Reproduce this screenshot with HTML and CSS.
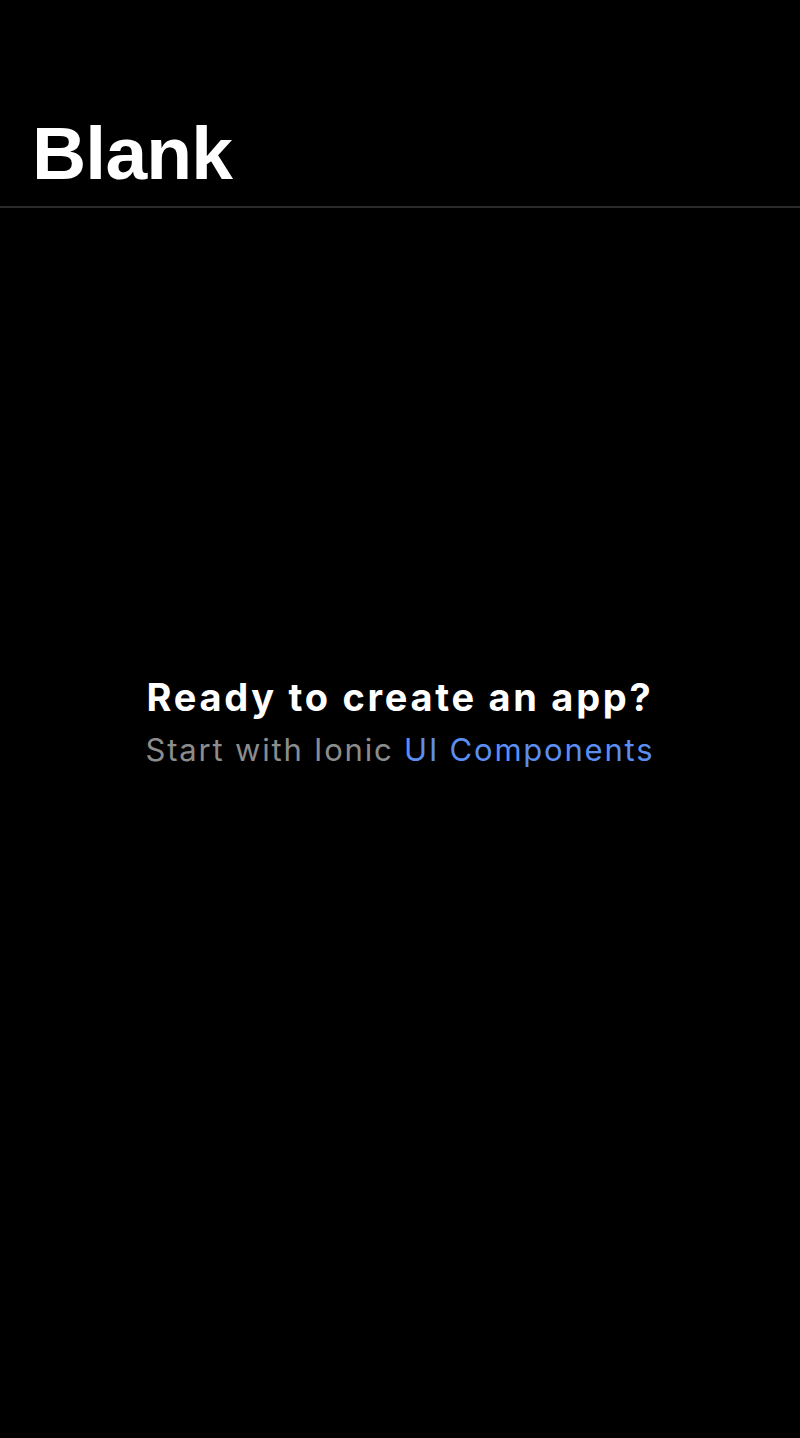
FILE: index.html
```html
<!DOCTYPE html>
<html lang="en">
<head>
<meta charset="utf-8">
<title>Blank</title>
<link rel="stylesheet" href="styles.css">
</head>
<body>
<div class="app">
  <header class="header">
    <h1 class="large-title">Blank</h1>
  </header>
  <main class="content">
    <div class="container">
      <strong class="headline">Ready to create an app?</strong>
      <p class="subline">Start with Ionic <a class="link" href="#">UI Components</a></p>
    </div>
  </main>
</div>
</body>
</html>
```
FILE: styles.css
```css
html, body {
  margin: 0;
  padding: 0;
  background: #000;
  height: 100%;
}
body {
  font-family: Inter, "Liberation Sans", Arial, sans-serif;
  color: #fff;
}
.app {
  display: flex;
  flex-direction: column;
  min-height: 1438px;
}
.header {
  padding: 113px 32px 13px;
  border-bottom: 2px solid #2a2a2a;
}
.large-title {
  margin: 0;
  font-family: "Liberation Sans", Arial, sans-serif;
  font-size: 75px;
  line-height: 80px;
  font-weight: 700;
  letter-spacing: -0.8px;
}
.content {
  flex: 1;
  display: flex;
  align-items: center;
  justify-content: center;
  padding-bottom: 203px;
}
.container {
  display: flex;
  flex-direction: column;
  align-items: center;
  text-align: center;
}
.headline {
  font-size: 38px;
  line-height: 46px;
  font-weight: 700;
  letter-spacing: 2.7px;
  color: #fff;
}
.subline {
  margin: 10px 0 0;
  font-size: 31px;
  line-height: 40px;
  letter-spacing: 1.8px;
  color: #8c8c8c;
}
.link {
  color: #5b8ef0;
  text-decoration: none;
}
```
